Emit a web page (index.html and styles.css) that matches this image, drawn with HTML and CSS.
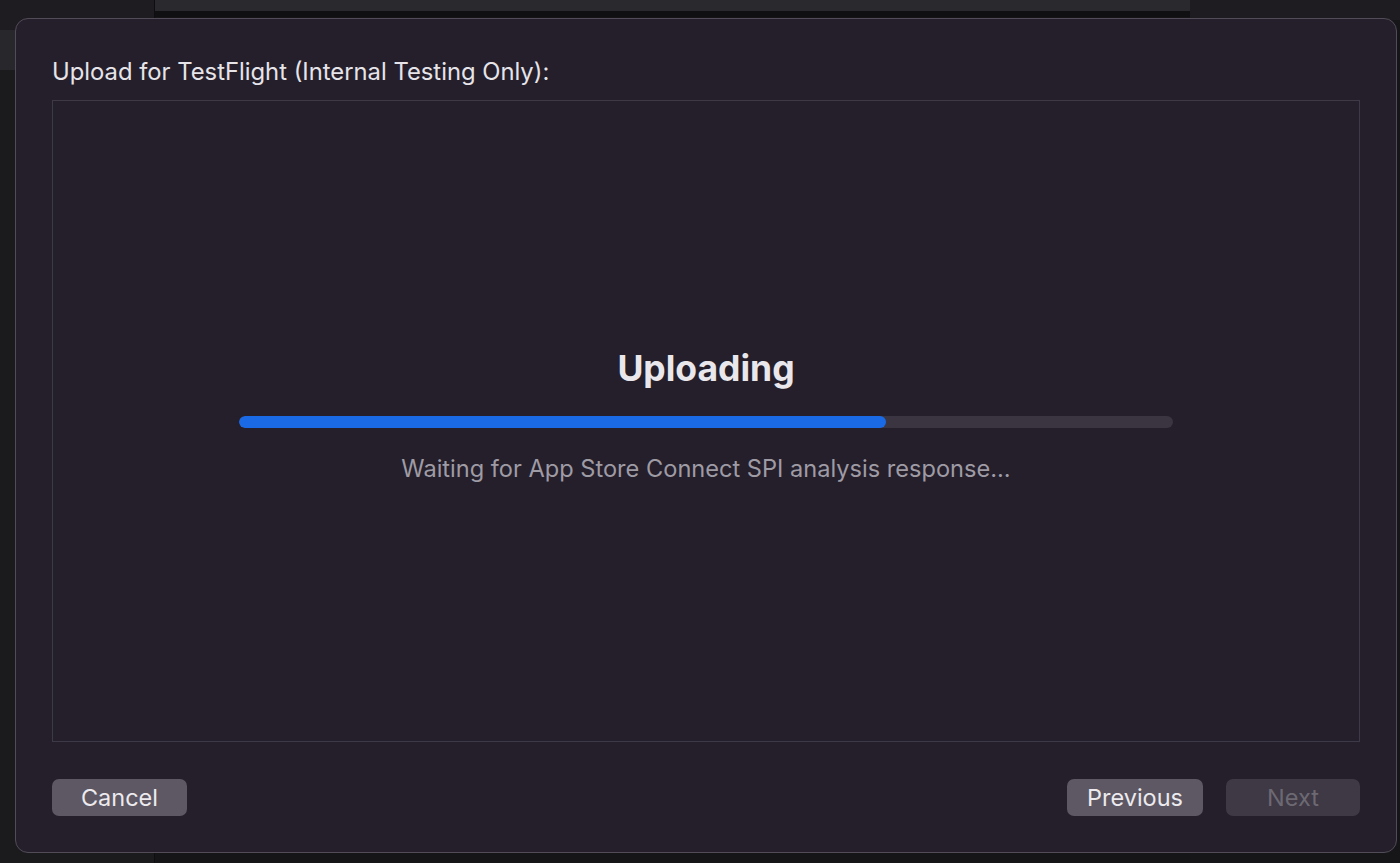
FILE: index.html
```html
<!DOCTYPE html>
<html lang="en">
<head>
  <meta charset="UTF-8">
  <title>Upload for TestFlight</title>
  <link rel="stylesheet" href="styles.css">
</head>
<body>
  <div class="window">
    <div class="col col-left">
      <div class="left-tab"></div>
    </div>
    <div class="col col-mid">
      <div class="mid-bar"></div>
    </div>
    <div class="col col-right"></div>
  </div>

  <div class="sheet">
    <h1 class="sheet-title">Upload for TestFlight (Internal Testing Only):</h1>

    <div class="panel">
      <div class="status">
        <h2>Uploading</h2>
        <div class="progress">
          <div class="progress-fill" style="width: 69.3%"></div>
        </div>
        <p>Waiting for App Store Connect SPI analysis response...</p>
      </div>
    </div>

    <div class="actions">
      <button class="btn">Cancel</button>
      <div class="actions-right">
        <button class="btn">Previous</button>
        <button class="btn btn-disabled" disabled>Next</button>
      </div>
    </div>
  </div>
</body>
</html>
```

FILE: styles.css
```css
html, body {
  height: 100%;
}
body {
  margin: 0;
  background-color: #161518;
  font-family: Inter, "Noto Sans", sans-serif;
  overflow: hidden;
}

/* window behind the sheet */
.window {
  display: grid;
  grid-template-columns: 155px 1035px 1fr;
  height: 100%;
}
.col-left {
  background: linear-gradient(#1f1c21 0, #1f1c21 30px, #1b1a1d 30px);
  border-right: 1px solid #0e0d10;
}
.left-tab {
  margin-top: 30px;
  width: 16px;
  height: 40px;
  background-color: #28272b;
}
.col-mid {
  background-color: #151417;
}
.mid-bar {
  height: 11px;
  background-color: #2a292d;
  border-bottom: 6px solid #101013;
}
.col-right {
  background: linear-gradient(#1f1c21 0, #1f1c21 20px, #161518 20px);
}

/* sheet (modal over window) */
.sheet {
  position: absolute;
  left: 15px;
  top: 18px;
  width: 1382px;
  height: 835px;
  box-sizing: border-box;
  padding: 37px 36px 36px 36px;
  background-color: #241f2b;
  border: 1px solid #514c58;
  border-radius: 13px;
  display: flex;
  flex-direction: column;
  color: #e4e2e7;
}
.sheet-title {
  margin: 0 0 12px 0;
  font-size: 23.8px;
  font-weight: 400;
  line-height: 32px;
  color: #e6e4e9;
}
.panel {
  flex: 1;
  border: 1px solid #3e3946;
  display: flex;
  align-items: center;
  justify-content: center;
}
.status {
  width: 934px;
  margin-bottom: 10px;
  text-align: center;
}
.status h2 {
  margin: 0 0 27px 0;
  font-size: 35.5px;
  font-weight: 700;
  line-height: 40px;
  color: #e9e7ec;
}
.progress {
  height: 12px;
  border-radius: 6px;
  background-color: #3a3541;
  overflow: hidden;
}
.progress-fill {
  height: 100%;
  border-radius: 6px;
  background-color: #1a6ae6;
}
.status p {
  margin: 26px 0 0 0;
  font-size: 23.6px;
  line-height: 30px;
  color: #9f9ba5;
}

.actions {
  display: flex;
  justify-content: space-between;
  margin-top: 37px;
}
.actions-right {
  display: flex;
  gap: 23px;
}
.btn {
  width: 135px;
  height: 37px;
  border: none;
  border-radius: 7px;
  background-color: #5d5863;
  color: #eceaee;
  font-family: Inter, "Noto Sans", sans-serif;
  font-size: 23.5px;
  padding: 0;
}
.actions-right .btn {
  width: 136px;
}
.actions-right .btn-disabled {
  width: 134px;
  background-color: #3e3945;
  color: #6d6973;
}
```
